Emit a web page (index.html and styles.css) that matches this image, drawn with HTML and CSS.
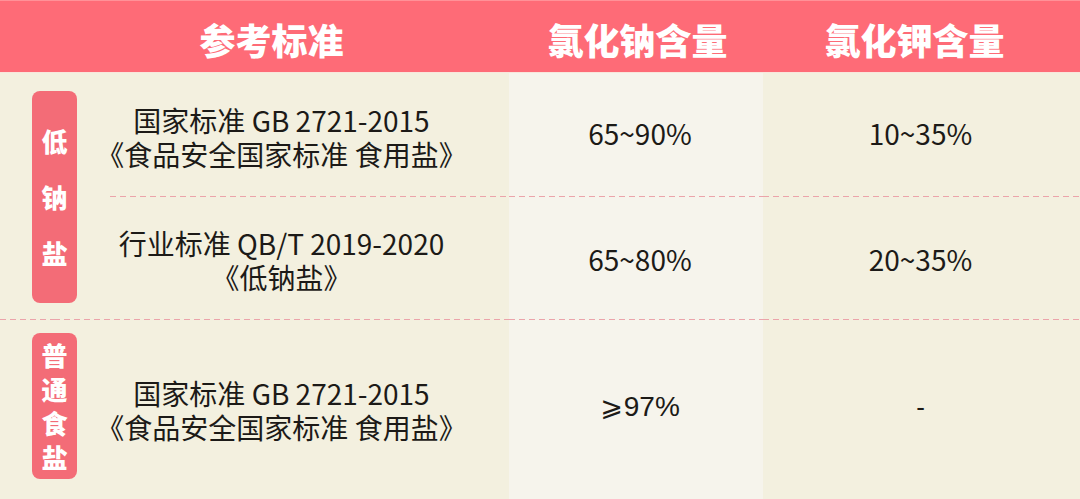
FILE: index.html
```html
<!DOCTYPE html>
<html lang="zh-CN">
<head>
<meta charset="utf-8">
<title>低钠盐标准</title>
<link rel="stylesheet" href="styles.css">
</head>
<body>
<div class="table">
  <div class="hd hd-std">参考标准</div>
  <div class="hd hd-na">氯化钠含量</div>
  <div class="hd hd-k">氯化钾含量</div>

  <div class="tag-cell tag-cell-low dash-b">
    <div class="tag tag-low"><span>低</span><span>钠</span><span>盐</span></div>
  </div>
  <div class="std r1 dash-b-inset"><span>国家标准 GB 2721-2015</span><span>《食品安全国家标准 食用盐》</span></div>
  <div class="val na r1 dash-b">65~90%</div>
  <div class="val k r1 dash-b">10~35%</div>

  <div class="std r2 dash-b"><span>行业标准 QB/T 2019-2020</span><span>《低钠盐》</span></div>
  <div class="val na r2 dash-b">65~80%</div>
  <div class="val k r2 dash-b">20~35%</div>

  <div class="tag-cell tag-cell-norm">
    <div class="tag tag-norm"><span>普</span><span>通</span><span>食</span><span>盐</span></div>
  </div>
  <div class="std r3"><span>国家标准 GB 2721-2015</span><span>《食品安全国家标准 食用盐》</span></div>
  <div class="val na r3 arial"><span class="ge">⩾</span>97%</div>
  <div class="val k r3 arial dashv">-</div>
</div>
</body>
</html>
```
FILE: styles.css
```css
html, body {
  margin: 0;
  padding: 0;
  background: #f3f0df;
}
body {
  width: 1080px;
  height: 499px;
  overflow: hidden;
  font-family: "Noto Sans CJK SC", "Noto Sans", sans-serif;
  color: #1c1a17;
}
.table {
  display: grid;
  grid-template-columns: 54px 455px 254px 1fr;
  grid-template-rows: 73px 124px 123px 1fr;
  height: 499px;
}
.hd {
  background: #fe6b77;
  border-top: 1px solid #ff9198;
  border-bottom: 1px solid #f9e6dc;
  color: #ffffff;
  font-size: 36px;
  font-weight: 900;
  display: flex;
  align-items: center;
  justify-content: center;
  padding-top: 4px;
  box-sizing: border-box;
  line-height: 1;
}
.hd-std { grid-column: 1 / 3; padding-left: 34px; }
.hd-na { grid-column: 3; padding-left: 3px; }
.hd-k { grid-column: 4; padding-right: 14px; }

.dash-b {
  background-image: repeating-linear-gradient(90deg, #eba4aa 0 6px, transparent 6px 10px);
  background-repeat: no-repeat;
  background-position: left bottom;
  background-size: 100% 1px;
}
.dash-b-inset {
  background-image: repeating-linear-gradient(90deg, #eba4aa 0 6px, transparent 6px 10px);
  background-repeat: no-repeat;
  background-position: right bottom;
  background-size: calc(100% - 56px) 1px;
}

.tag-cell { grid-column: 1; }
.tag-cell-low { grid-row: 2 / 4; padding-top: 18px; }
.tag-cell-norm { grid-row: 4; padding-top: 13px; }
.tag {
  margin-left: 32px;
  width: 45px;
  background: #f36c77;
  border-radius: 8px;
  color: #fff;
  font-size: 26px;
  font-weight: 900;
  display: flex;
  flex-direction: column;
  align-items: center;
  box-sizing: border-box;
}
.tag-low {
  height: 212px;
  padding: 22px 0;
  line-height: 56px;
}
.tag-norm {
  height: 146px;
  padding: 5px 0;
  line-height: 34px;
}

.std {
  grid-column: 2;
  display: flex;
  flex-direction: column;
  align-items: center;
  justify-content: center;
  font-size: 28px;
  line-height: 34px;
  white-space: nowrap;
}
.std span { display: block; }
.r1 { grid-row: 2; }
.r2 { grid-row: 3; }
.r3 { grid-row: 4; }
.r1.std { padding-top: 4px; }
.r2.std { padding-top: 2px; }

.val {
  display: flex;
  align-items: center;
  justify-content: center;
  font-size: 28px;
  line-height: 34px;
}
.val.na {
  grid-column: 3;
  background-color: #f6f4ec;
  padding-left: 8px;
}
.val.k { grid-column: 4; padding-right: 2px; }
.r1.val { padding-bottom: 4px; }
.r2.val { padding-top: 1px; }
.r3.val { padding-bottom: 6px; }
.arial { font-family: "Liberation Sans", Arial, sans-serif; }
.ge {
  font-family: "DejaVu Sans", sans-serif;
  font-size: 27px;
  margin-right: 1px;
}
.dashv { font-size: 26px; }
```
